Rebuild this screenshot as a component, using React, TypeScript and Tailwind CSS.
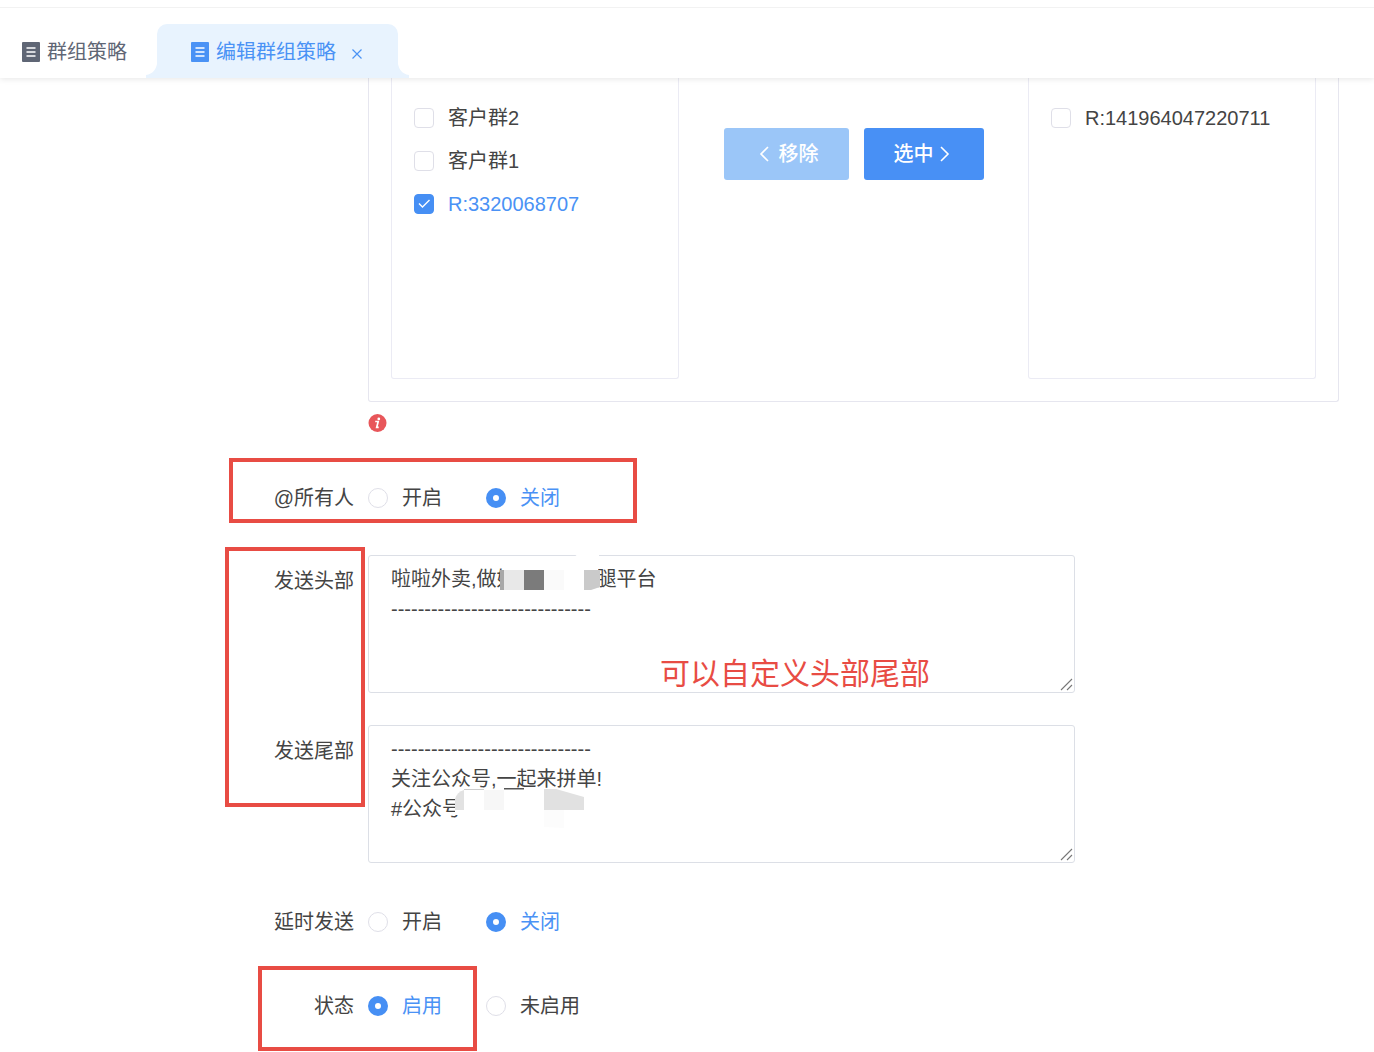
import { useState } from "react";
import type { ReactNode } from "react";

function DocIcon() {
  return (
    <svg width="18" height="20" viewBox="0 0 18 20" aria-hidden="true">
      <rect width="18" height="20" rx="1" fill="currentColor" />
      <path d="M4.500 6h9M4.500 10h9M4.500 14h9" stroke="#fff" strokeWidth="1.6" />
    </svg>
  );
}

function TabFlare({ side }: { side: "left" | "right" }) {
  return (
    <svg
      width="11"
      height="14"
      viewBox="0 0 11 14"
      aria-hidden="true"
      className={side === "left" ? "absolute bottom-0 right-full" : "absolute bottom-0 left-full -scale-x-100"}
    >
      <path d="M11 0v14H0v-3C7 10 10 5 11 0Z" fill="#e8f3fe" />
    </svg>
  );
}

function Chevron({ d }: { d: string }) {
  return (
    <svg width="20" height="20" viewBox="0 0 20 20" fill="none" stroke="currentColor" strokeWidth="1.6" aria-hidden="true">
      <path d={d} />
    </svg>
  );
}

function CheckItem({ label, initial = false }: { label: string; initial?: boolean }) {
  const [on, setOn] = useState(initial);
  return (
    <label className={on ? "flex h-[43px] items-center gap-3.5 text-[#4a92f5]" : "flex h-[43px] items-center gap-3.5"}>
      <span className="relative h-5 w-5">
        <input
          type="checkbox"
          checked={on}
          onChange={() => setOn(!on)}
          className="block h-5 w-5 appearance-none rounded border border-[#dfdfe8] bg-white checked:border-[#468ff4] checked:bg-[#468ff4]"
        />
        {on && (
          <svg width="20" height="20" viewBox="0 0 20 20" fill="none" className="pointer-events-none absolute inset-0" aria-hidden="true">
            <path d="M5 9.500l3.500 3.500L15.500 6" stroke="#fff" strokeWidth="1.4" />
          </svg>
        )}
      </span>
      {label}
    </label>
  );
}

function RadioRow({ label, name, options, initial, mark }: {
  label: string;
  name: string;
  options: string[];
  initial: string;
  mark?: ReactNode;
}) {
  const [value, setValue] = useState(initial);
  return (
    <div role="radiogroup" aria-label={label} className="relative grid h-[52px] grid-cols-[354px_1fr] items-center gap-x-3.5 pt-0.5">
      <span className="text-right">{label}</span>
      <div className="flex gap-11">
        {options.map((o) => (
          <label key={o} className={o === value ? "flex items-center gap-3.5 text-[#4a92f5]" : "flex items-center gap-3.5"}>
            <input
              type="radio"
              name={name}
              checked={o === value}
              onChange={() => setValue(o)}
              className="h-5 w-5 appearance-none rounded-full border border-[#dfdfe8] bg-white checked:border-[7px] checked:border-[#468ff4]"
            />
            {o}
          </label>
        ))}
      </div>
      {mark}
    </div>
  );
}

function TextRow({ id, label, text, children }: { id: string; label: string; text: string; children?: ReactNode }) {
  return (
    <div className="grid grid-cols-[354px_1fr] gap-x-3.5">
      <label htmlFor={id} className="text-right leading-[52px]">{label}</label>
      <div className="relative w-full max-w-[707px]">
        <textarea
          id={id}
          defaultValue={text}
          spellCheck={false}
          className="block h-[138px] w-full resize-none rounded-[3px] border border-[#dcdfe6] bg-white px-[22px] py-2 leading-[30px] outline-none"
        />
        <svg width="14" height="14" viewBox="0 0 14 14" className="pointer-events-none absolute bottom-px right-px" aria-hidden="true">
          <path d="M1 12L12 1M7 12l5-5" stroke="#777" strokeWidth="1.1" />
        </svg>
        {children}
      </div>
    </div>
  );
}

export default function App() {
  return (
    <div className="overflow-hidden bg-white font-['Liberation_Sans','Noto_Sans_CJK_SC',sans-serif] text-[20px] leading-[30px] text-[#444]">
      <header className="relative z-10 bg-white pt-[7px] shadow-[0_1px_6px_rgba(0,0,0,0.1)]">
        <nav className="flex gap-[30px] border-t border-[#f2f2f2] pl-[22px] pt-4">
          <button type="button" className="flex h-[54px] items-center gap-[7px] pt-0.5 text-[#5f6675]">
            <DocIcon />
            群组策略
          </button>
          <div className="relative flex h-[54px] items-center rounded-t-[10px] bg-[#e8f3fe] px-[34px] pt-0.5 text-[#4a92f5]">
            <TabFlare side="left" />
            <button type="button" className="flex items-center gap-[7px]">
              <DocIcon />
              编辑群组策略
            </button>
            <button type="button" aria-label="关闭标签" className="ml-[14px] pt-1">
              <svg width="14" height="14" viewBox="0 0 14 14" stroke="currentColor" strokeWidth="1.2" aria-hidden="true">
                <path d="M2.500 2.500l9 9M11.500 2.500l-9 9" />
              </svg>
            </button>
            <TabFlare side="right" />
          </div>
        </nav>
      </header>

      <main className="pb-[21px] pr-[35px]">
        <section className="ml-[368px] flex rounded-b-[3px] border border-t-0 border-[#e6e6ef] px-[22px] pb-[22px]">
          <div className="h-[301px] w-[288px] rounded-b-[3px] border border-t-0 border-[#ebebf4] pl-[22px] pt-[18px]">
            <CheckItem label="客户群2" />
            <CheckItem label="客户群1" />
            <CheckItem label="R:3320068707" initial />
          </div>
          <div className="flex flex-1 items-start justify-center gap-[15px] pt-[50px]">
            <button type="button" disabled className="flex h-[52px] items-center gap-[5px] rounded-[3px] bg-[#9bc6f8] px-[30px] font-medium text-white">
              <Chevron d="M14 3L7 10l7 7" />
              移除
            </button>
            <button type="button" className="flex h-[52px] items-center rounded-[3px] bg-[#4890f5] px-[30px] font-medium text-white">
              选中
              <Chevron d="M7 3l7 7-7 7" />
            </button>
          </div>
          <div className="h-[301px] w-[288px] rounded-b-[3px] border border-t-0 border-[#ebebf4] pl-[22px] pt-[18px]">
            <CheckItem label="R:141964047220711" />
          </div>
        </section>

        <div className="ml-[368px] pb-[39px] pt-3">
          <svg width="19" height="18" viewBox="0 0 19 18" role="img" aria-label="提示" className="block">
            <circle cx="9.500" cy="9" r="9" fill="#e8565a" />
            <circle cx="10.800" cy="4.900" r="1.400" fill="#fff" />
            <path d="M7.200 7.500h3L8.700 13.300h2" fill="none" stroke="#fff" strokeWidth="1.700" />
          </svg>
        </div>

        <form className="flex flex-col gap-8">
          <RadioRow
            label="@所有人"
            name="mention"
            options={["开启", "关闭"]}
            initial="关闭"
            mark={<div className="pointer-events-none absolute -top-[13px] left-[229px] h-[65px] w-[408px] border-4 border-[#e84c44]" />}
          />

          <div className="relative flex flex-col gap-8">
            <TextRow id="head" label="发送头部" text={"啦啦外卖,做好　　　　腿平台\n------------------------------"}>
              <svg width="120" height="44" viewBox="0 0 120 44" className="pointer-events-none absolute -top-1 left-[127px]" aria-hidden="true">
                <path d="M9 17h94v23H9zM84 2h20v5H78z" fill="#fff" />
                <path d="M5 19h4v20H5z" fill="#a8a8a8" />
                <path d="M9 19h20v20H9z" fill="#e8e8e8" />
                <path d="M29 19h20v20H29z" fill="#7b7b7b" />
                <path d="M49 19h20v20H49z" fill="#fafafa" />
                <path d="M89 19h16v17l-9 3h-7z" fill="#cacaca" />
              </svg>
              <p className="pointer-events-none absolute bottom-1 left-[292px] whitespace-nowrap text-[30px] leading-[30px] text-[#e84c44]">
                可以自定义头部尾部
              </p>
            </TextRow>
            <TextRow id="tail" label="发送尾部" text={"------------------------------\n关注公众号,一起来拼单!\n#公众号"}>
              <svg width="136" height="42" viewBox="0 0 136 42" className="pointer-events-none absolute left-[86px] top-[62px]" aria-hidden="true">
                <path d="M1 28V11Q3 2 13 2h117v24l-24 14H6V28z" fill="#fff" />
                <path d="M1 23V12Q3 5 10 3v20z" fill="#e2e2e2" />
                <path d="M10 2h20v1H10z" fill="#ccc" />
                <path d="M30 3h20v20H30z" fill="#f7f7f7" />
                <path d="M50 1h20v1.500H50z" fill="#555" />
                <path d="M90 2h12l28 8v13H90z" fill="#e1e1e1" />
                <path d="M90 23h20v18l-20-1z" fill="#fcfcfc" />
              </svg>
            </TextRow>
            <div className="pointer-events-none absolute -top-2 left-[225px] h-[260px] w-[140px] border-4 border-[#e84c44]" />
          </div>

          <RadioRow label="延时发送" name="delay" options={["开启", "关闭"]} initial="关闭" />
          <RadioRow
            label="状态"
            name="status"
            options={["启用", "未启用"]}
            initial="启用"
            mark={<div className="pointer-events-none absolute -top-[13px] left-[258px] h-[85px] w-[219px] border-4 border-[#e84c44]" />}
          />
        </form>
      </main>
    </div>
  );
}
